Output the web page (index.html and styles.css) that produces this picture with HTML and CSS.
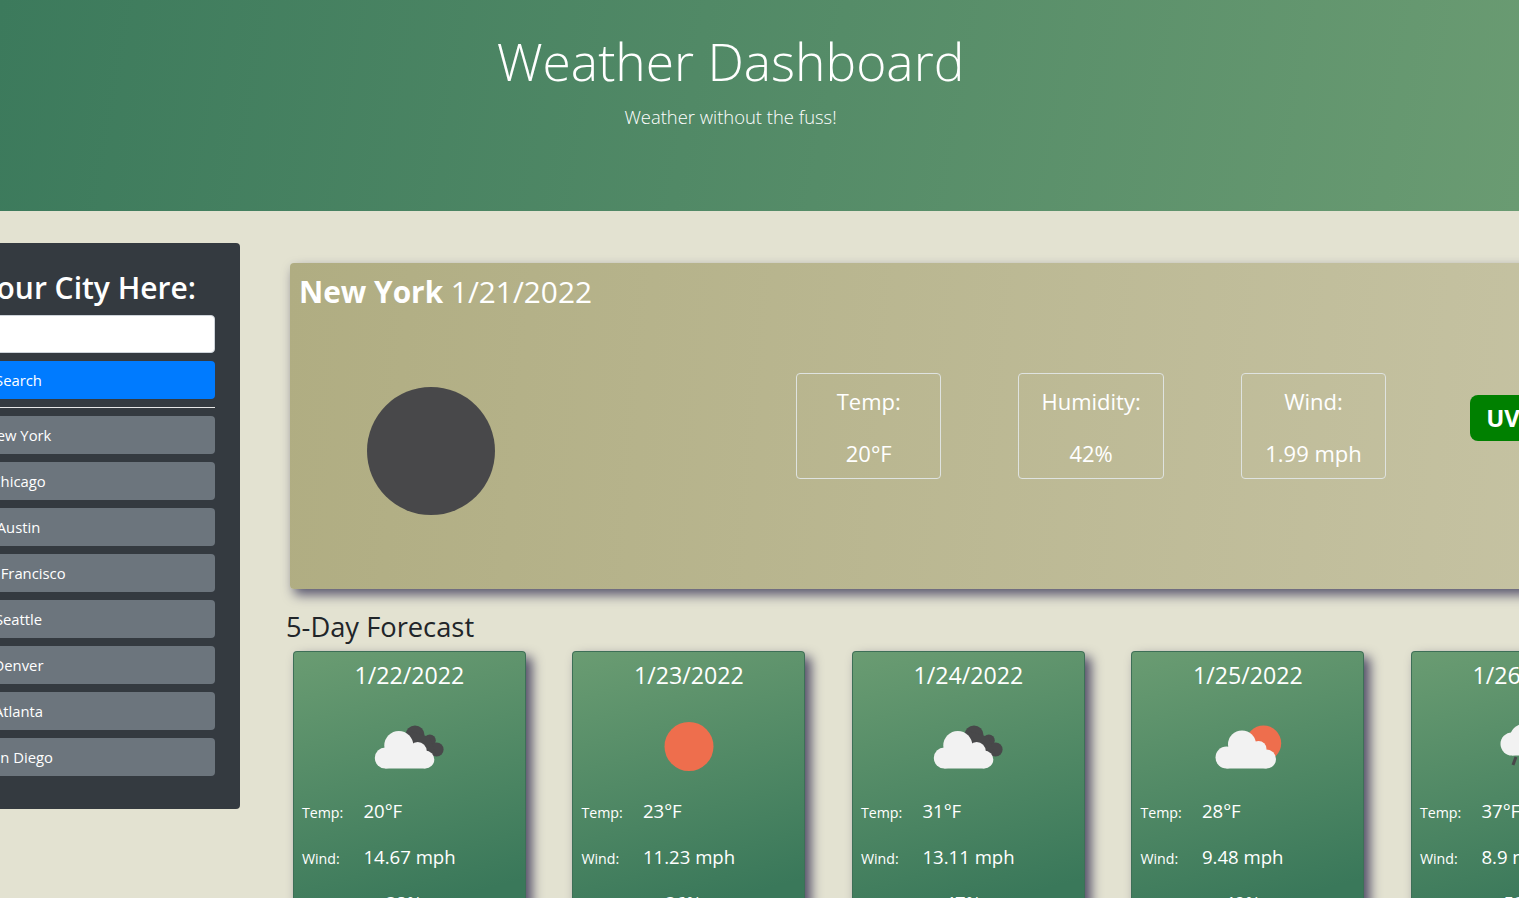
FILE: index.html
```html
<!DOCTYPE html>
<html lang="en">
<head>
    <meta charset="UTF-8">
    <meta name="viewport" content="width=device-width, initial-scale=1.0">
    <title>Weather Dashboard</title>
    <link rel="stylesheet" href="styles.css">
</head>
<body>

    <header class="jumbotron">
        <h1>Weather Dashboard</h1>
        <p>Weather without the fuss!</p>
    </header>

    <div class="layout">
        <!-- City search -->
        <aside class="sidebar">
            <h2>Enter Your City Here:</h2>
            <input type="text" class="city-input">
            <button class="btn btn-primary">Search</button>
            <hr>
            <button class="btn">New York</button>
            <button class="btn">Chicago</button>
            <button class="btn">Austin</button>
            <button class="btn">San Francisco</button>
            <button class="btn">Seattle</button>
            <button class="btn">Denver</button>
            <button class="btn">Atlanta</button>
            <button class="btn">San Diego</button>
        </aside>

        <main class="content">
            <!-- Current weather -->
            <section class="current">
                <h2 class="current-title"><strong>New York</strong> 1/21/2022</h2>
                <div class="current-row">
                    <svg class="moon" viewBox="0 0 128 128"><circle cx="64" cy="64" r="64" fill="#48484a"/></svg>
                    <div class="stat"><p>Temp:</p><p>20°F</p></div>
                    <div class="stat"><p>Humidity:</p><p>42%</p></div>
                    <div class="stat"><p>Wind:</p><p>1.99 mph</p></div>
                    <div class="uv">UV Index</div>
                </div>
            </section>

            <h3 class="forecast-title">5-Day Forecast</h3>

            <div class="forecast">
                <article class="day">
                    <h4>1/22/2022</h4>
                    <svg class="day-icon" viewBox="0 0 100 100">
                        <g fill="#48484a"><circle cx="56" cy="38" r="9.5"/><circle cx="70.8" cy="43.5" r="6"/><circle cx="77.6" cy="52.5" r="7"/><path d="M50.5 34 L70.5 40 L77.5 59 L55.5 60 Z"/></g>
                        <g fill="#f2f2f2"><circle cx="26.3" cy="61" r="10.5"/><circle cx="39.8" cy="48.5" r="14.5"/><circle cx="58.7" cy="54" r="9"/><circle cx="66.3" cy="62.5" r="9"/><rect x="26.3" y="55" width="40" height="16.5"/></g>
                    </svg>
                    <div class="line"><span class="label">Temp:</span><span class="value">20°F</span></div>
                    <div class="line"><span class="label">Wind:</span><span class="value">14.67 mph</span></div>
                    <div class="line"><span class="label">Humidity:</span><span class="value">38%</span></div>
                </article>
                <article class="day">
                    <h4>1/23/2022</h4>
                    <svg class="day-icon" viewBox="0 0 100 100"><circle cx="50" cy="49.5" r="24.5" fill="#ee6e4d"/></svg>
                    <div class="line"><span class="label">Temp:</span><span class="value">23°F</span></div>
                    <div class="line"><span class="label">Wind:</span><span class="value">11.23 mph</span></div>
                    <div class="line"><span class="label">Humidity:</span><span class="value">36%</span></div>
                </article>
                <article class="day">
                    <h4>1/24/2022</h4>
                    <svg class="day-icon" viewBox="0 0 100 100">
                        <g fill="#48484a"><circle cx="56" cy="38" r="9.5"/><circle cx="70.8" cy="43.5" r="6"/><circle cx="77.6" cy="52.5" r="7"/><path d="M50.5 34 L70.5 40 L77.5 59 L55.5 60 Z"/></g>
                        <g fill="#f2f2f2"><circle cx="26.3" cy="61" r="10.5"/><circle cx="39.8" cy="48.5" r="14.5"/><circle cx="58.7" cy="54" r="9"/><circle cx="66.3" cy="62.5" r="9"/><rect x="26.3" y="55" width="40" height="16.5"/></g>
                    </svg>
                    <div class="line"><span class="label">Temp:</span><span class="value">31°F</span></div>
                    <div class="line"><span class="label">Wind:</span><span class="value">13.11 mph</span></div>
                    <div class="line"><span class="label">Humidity:</span><span class="value">47%</span></div>
                </article>
                <article class="day">
                    <h4>1/25/2022</h4>
                    <svg class="day-icon" viewBox="0 0 100 100">
                        <circle cx="65.5" cy="46.2" r="17.7" fill="#ee6e4d"/>
                        <g fill="#f2f2f2"><circle cx="28.5" cy="60.5" r="11"/><circle cx="44" cy="47.5" r="14"/><circle cx="60.5" cy="52" r="8"/><circle cx="68.5" cy="62" r="9.5"/><rect x="28.5" y="55" width="40" height="16.5"/></g>
                    </svg>
                    <div class="line"><span class="label">Temp:</span><span class="value">28°F</span></div>
                    <div class="line"><span class="label">Wind:</span><span class="value">9.48 mph</span></div>
                    <div class="line"><span class="label">Humidity:</span><span class="value">49%</span></div>
                </article>
                <article class="day">
                    <h4>1/26/2022</h4>
                    <svg class="day-icon" viewBox="0 0 100 100">
                        <g fill="#f2f2f2"><circle cx="35" cy="47" r="11.5"/><circle cx="48" cy="42" r="15.5"/><rect x="35" y="44" width="40" height="14.5"/></g>
                        <path d="M39 60 L36 68" stroke="#48484a" stroke-width="3"/>
                    </svg>
                    <div class="line"><span class="label">Temp:</span><span class="value">37°F</span></div>
                    <div class="line"><span class="label">Wind:</span><span class="value">8.9 mph</span></div>
                    <div class="line"><span class="label">Humidity:</span><span class="value">52%</span></div>
                </article>
            </div>
        </main>
    </div>

</body>
</html>
```

FILE: styles.css
```css
/* General Page Styling */
html, body {
    height: 100%;
    overflow: hidden;
}

body {
    font-family: 'Open Sans', 'Noto Sans', sans-serif;
    background-color: #e3e2d1;
    color: #212529;
    margin: 0;
}

/* Header */
.jumbotron {
    height: 211px;
    box-sizing: border-box;
    padding: 28px 58px 0 0;
    text-align: center;
    color: white;
    background: linear-gradient(100deg, #3c7a5c 0%, #6a9b72 100%);
}

.jumbotron h1 {
    margin: 0;
    font-size: 51.5px;
    font-weight: 300;
    line-height: 66px;
}

.jumbotron p {
    margin: 9px 0 0;
    font-size: 18.4px;
    font-weight: 300;
    line-height: 27px;
}

.layout {
    display: flex;
    align-items: flex-start;
    margin: 32px 0 0 -203px;
}

/* Sidebar */
.sidebar {
    flex: 0 0 443px;
    box-sizing: border-box;
    display: flex;
    flex-direction: column;
    gap: 8px;
    padding: 25px 25px 33px;
    background-color: #343a40;
    border-radius: 4px;
    color: white;
}

.sidebar h2 {
    height: 38px;
    margin: 0 0 1px;
    padding: 1px 19px 0 0;
    box-sizing: border-box;
    text-align: right;
    font-size: 30px;
    font-weight: 600;
    line-height: 38px;
}

.city-input {
    height: 38px;
    box-sizing: border-box;
    border: 1px solid #ced4da;
    border-radius: 4px;
    background-color: white;
}

.btn {
    height: 38px;
    padding: 0;
    border: 0;
    border-radius: 4px;
    font-family: inherit;
    font-size: 14.8px;
    color: white;
    background-color: #6c757d;
}

.btn-primary {
    background-color: #007bff;
}

.sidebar hr {
    width: 100%;
    margin: 0;
    border: 0;
    border-top: 1px solid #e6e6e6;
}

/* Main content */
.content {
    flex: 0 0 auto;
    margin-left: 50px;
    margin-top: 20px;
}

.current {
    width: 1500px;
    height: 326px;
    box-sizing: border-box;
    padding: 9px;
    color: white;
    border-radius: 4px;
    background: linear-gradient(95deg, #b0ad82 0%, #c9c6a8 100%);
    box-shadow: 4px 6px 12px #5a5870;
}

.current-title {
    margin: 0;
    font-size: 29.8px;
    font-weight: 400;
    line-height: 40px;
}

.current-title strong {
    font-weight: 700;
}

.current-row {
    display: flex;
    align-items: flex-start;
    margin-top: 61px;
}

.moon {
    width: 128px;
    height: 128px;
    margin: 14px 0 0 68px;
    flex-shrink: 0;
}

.stat {
    width: 145.4px;
    height: 106px;
    box-sizing: border-box;
    flex-shrink: 0;
    margin-left: 77px;
    border: 1px solid #dfe3e0;
    border-radius: 4px;
    text-align: center;
    font-size: 22px;
    font-weight: 400;
}

.moon + .stat {
    margin-left: 301px;
}

.stat p {
    margin: 0;
    padding-top: 12px;
    line-height: 30px;
}

.stat p + p {
    padding-top: 22px;
}

.uv {
    margin: 22px 0 0 84px;
    padding: 0 16px;
    height: 46px;
    line-height: 46px;
    flex-shrink: 0;
    background-color: #008000;
    border-radius: 8px;
    font-size: 24px;
    font-weight: 700;
}

/* Forecast */
.forecast-title {
    margin: 21px 0 7px -4px;
    font-size: 27.3px;
    font-weight: 500;
    line-height: 34px;
}

.forecast {
    display: flex;
    gap: 46.5px;
    margin-left: 2.9px;
}

.day {
    flex: 0 0 233px;
    height: 300px;
    box-sizing: border-box;
    color: white;
    border: 1px solid #3d6f57;
    border-bottom: 0;
    border-radius: 4px 4px 0 0;
    background: linear-gradient(165deg, #6a9c72 0%, #3a785a 80%);
    box-shadow: 6px 6px 12px #4f4c66;
}

.day h4 {
    margin: 9px 0 0;
    text-align: center;
    font-size: 23.2px;
    font-weight: 500;
    line-height: 28px;
}

.day-icon {
    display: block;
    width: 100px;
    height: 100px;
    margin: 8px 0 -1px 65.5px;
}

.line {
    display: flex;
    align-items: baseline;
    gap: 19.5px;
    height: 46px;
    padding-left: 8px;
}

.label {
    min-width: 42px;
    font-size: 14.2px;
    line-height: 30px;
}

.value {
    font-size: 18.6px;
    line-height: 30px;
}
```
